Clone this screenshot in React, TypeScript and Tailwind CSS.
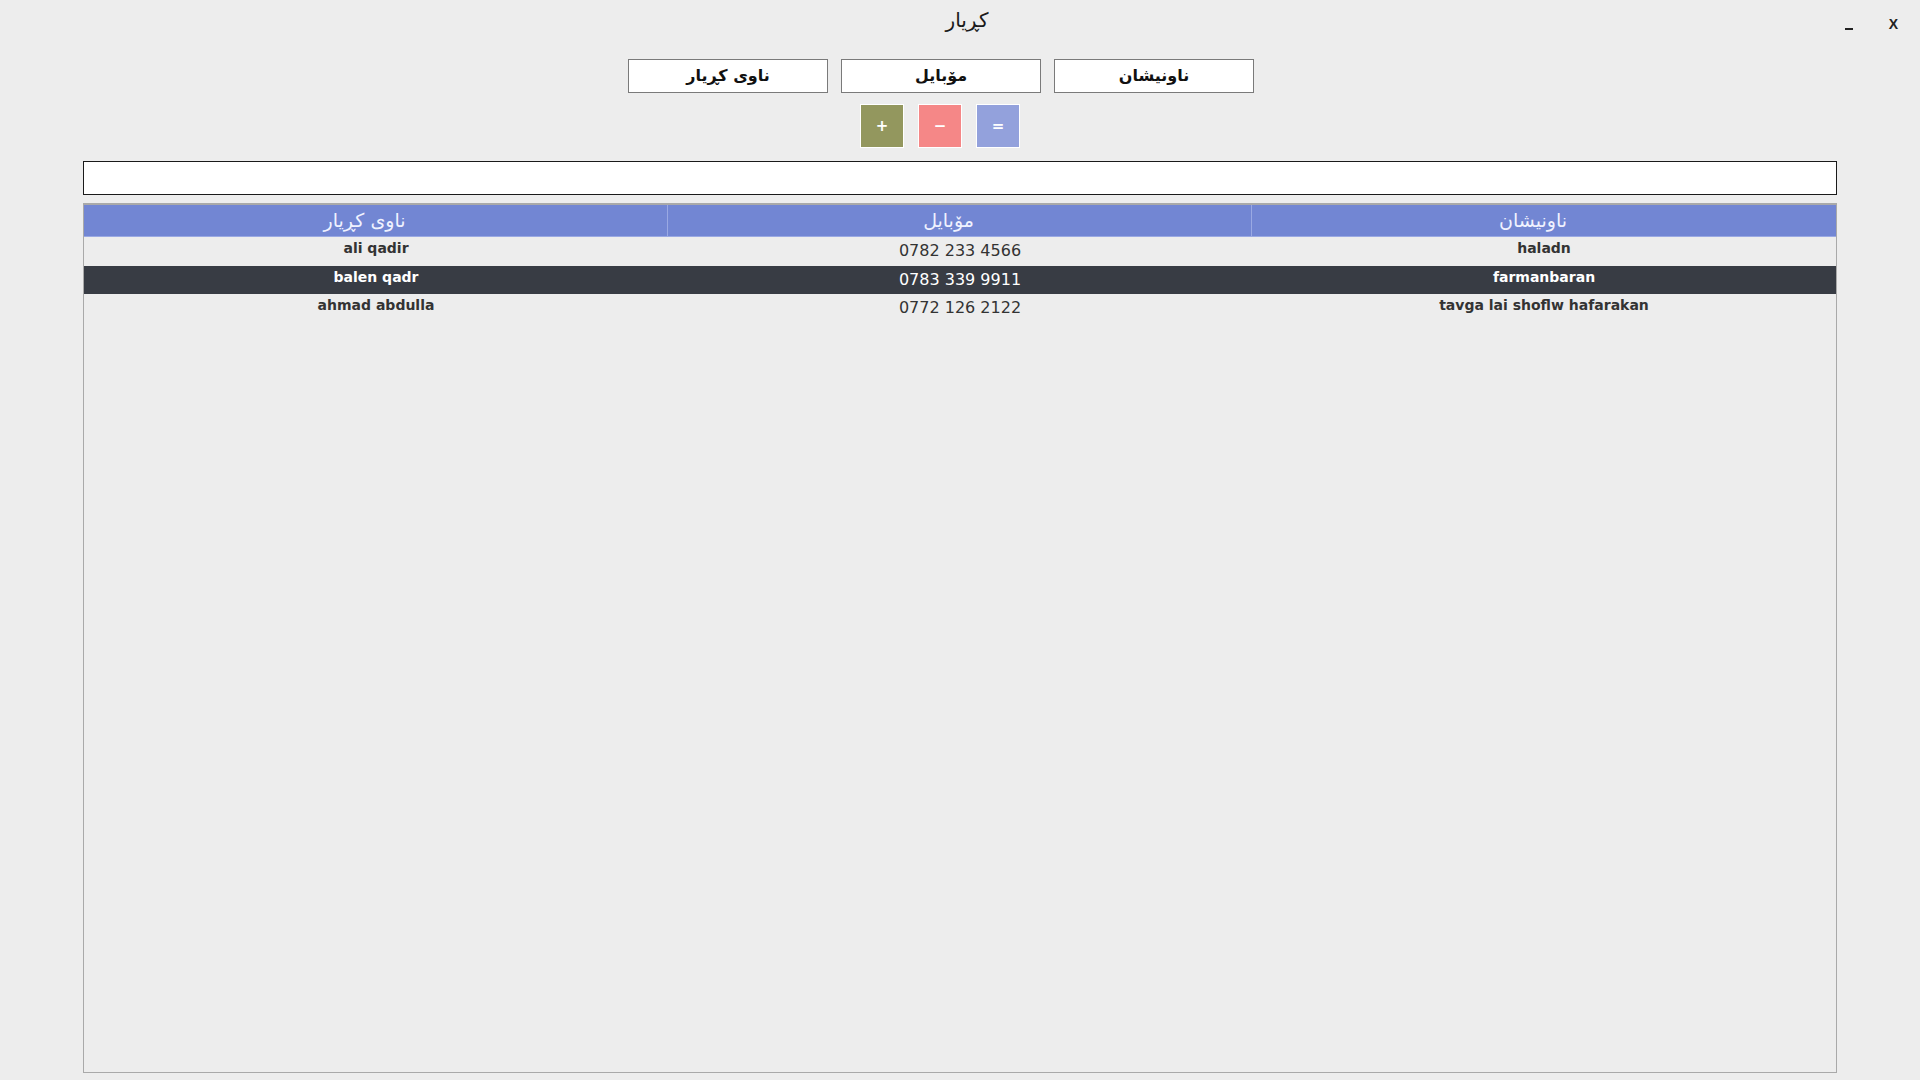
import React from "react";

const rows = [
  { name: "ali qadir", phone: "0782 233 4566", addr: "haladn", dark: false, h: "h-[29px]" },
  { name: "balen qadr", phone: "0783 339 9911", addr: "farmanbaran", dark: true, h: "h-[28px]" },
  { name: "ahmad abdulla", phone: "0772 126 2122", addr: "tavga lai shoflw hafarakan", dark: false, h: "h-[28px]" },
];

export default function App() {
  return (
    <div
      className="w-[1920px] h-[1080px] bg-[#ededed] flex flex-col overflow-hidden"
      style={{ fontFamily: '"DejaVu Sans", "Noto Sans", sans-serif' }}
    >
      {/* title bar */}
      <div className="relative h-[59px] flex justify-center pl-[14px]">
        <div className="pt-[8px] text-[20px] leading-[24px] text-[#1a1a1a]" dir="rtl">
          کڕیار
        </div>
        <div className="absolute right-[22px] top-[16px] flex items-center gap-[36px]">
          <div className="w-[8px] h-[2px] bg-[#222] mt-[9px]" />
          <div className="text-[14px] leading-[16px] text-[#222] font-bold" style={{ fontFamily: '"Liberation Sans", sans-serif' }}>
            X
          </div>
        </div>
      </div>

      {/* field buttons */}
      <div className="h-[34px] flex justify-center gap-[13px] pr-[38px]">
        {["ناوی کڕیار", "مۆبایل", "ناونیشان"].map((t) => (
          <div
            key={t}
            dir="rtl"
            className="w-[200px] h-[34px] bg-white border border-[#7a7a7a] flex items-center justify-center text-[16px] font-bold text-[#111]"
          >
            {t}
          </div>
        ))}
      </div>

      {/* action buttons */}
      <div className="mt-[11px] h-[44px] flex justify-center gap-[14px] pr-[40px]">
        <div className="w-[44px] h-[44px] bg-[#93975e] border border-white flex items-center justify-center text-white text-[15px] font-bold">+</div>
        <div className="w-[44px] h-[44px] bg-[#f58787] border border-white flex items-center justify-center text-white text-[15px] font-bold">−</div>
        <div className="w-[44px] h-[44px] bg-[#93a1dc] border border-white flex items-center justify-center text-white text-[15px] font-bold">=</div>
      </div>

      {/* search */}
      <div className="mt-[13px] mx-[83px] h-[34px] bg-white border-[1.5px] border-[#1a1a1a]" />

      {/* table */}
      <div className="mt-[8px] mx-[83px] mb-[7px] flex-1 border border-[#a9a9a9] border-t-2 flex flex-col">
        <div className="grid grid-cols-3 h-[32px] bg-[#7286d3]">
          {["ناوی کڕیار", "مۆبایل", "ناونیشان"].map((t, i) => (
            <div
              key={t}
              className={`flex items-center justify-center pr-[22px] text-[19px] text-[#f0f2ff] border-[#9aa9e3] border-b ${i < 2 ? "border-r" : ""}`}
            >
              <span dir="rtl">{t}</span>
            </div>
          ))}
        </div>
        {rows.map((r) => (
          <div
            key={r.name}
            className={`grid grid-cols-3 ${r.h} ${r.dark ? "bg-[#383c44] text-white" : "text-[#333]"}`}
          >
            <div className="flex justify-center pt-[2px] text-[14px] font-bold leading-[18px]">{r.name}</div>
            <div className="flex justify-center pt-[4px] text-[16px] leading-[20px]">{r.phone}</div>
            <div className="flex justify-center pt-[2px] text-[14px] font-bold leading-[18px]">{r.addr}</div>
          </div>
        ))}
      </div>
    </div>
  );
}
